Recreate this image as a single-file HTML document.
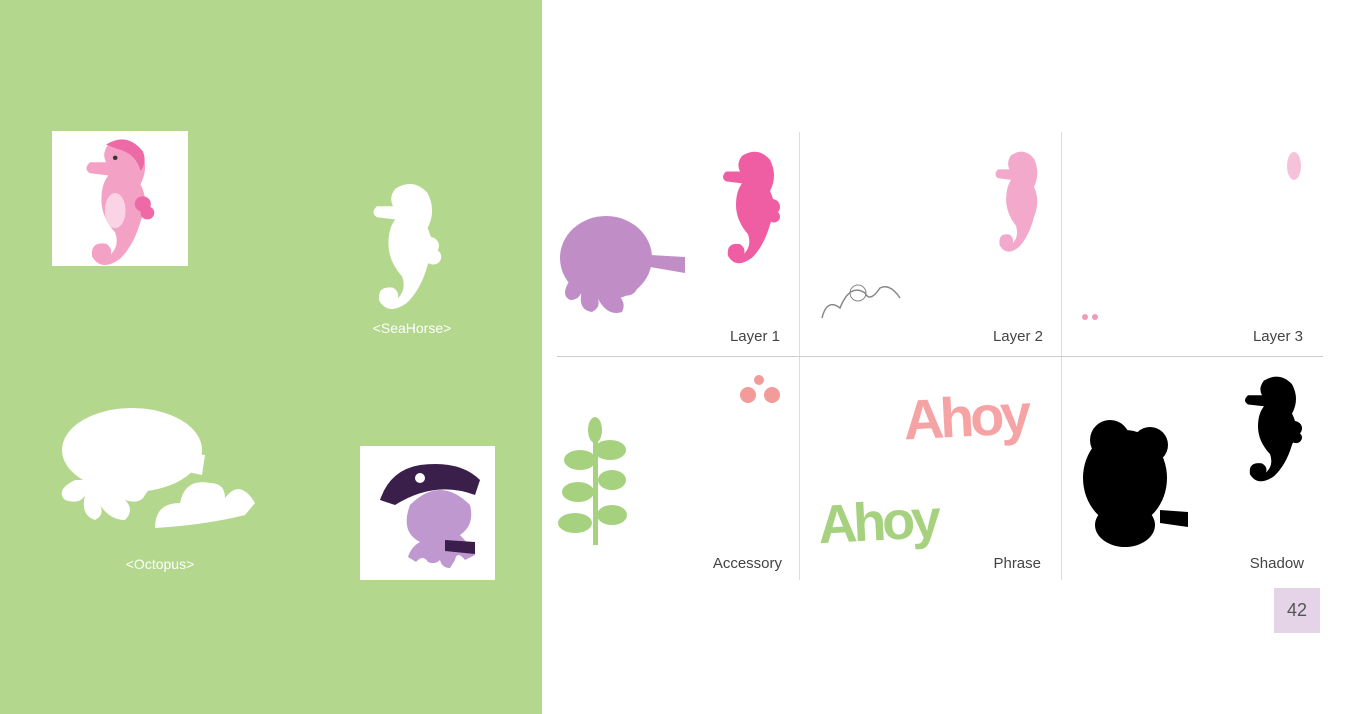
<!DOCTYPE html>
<html><head><meta charset="utf-8"><style>
html,body{margin:0;padding:0;width:1365px;height:714px;overflow:hidden;background:#fff;font-family:"Liberation Sans",sans-serif}
.abs{position:absolute}
.lbl{position:absolute;font-size:15px;color:#444;text-align:right;width:120px}
</style></head><body>
<div class="abs" style="left:0;top:0;width:542px;height:714px;background:#b3d78c"></div>
<svg class="abs" style="left:0;top:0" width="1365" height="714" viewBox="0 0 1365 714">
<rect x="52" y="131" width="136" height="135" fill="#fff"/>
<g transform="translate(83 138) scale(1.15 1.1)">
<path d="M22 6 Q38 -4 50 10 Q58 26 50 42 Q58 58 50 76 Q44 98 32 110 Q16 122 8 108 Q6 94 20 96 Q26 100 24 106 Q32 98 28 86 Q16 72 16 56 Q16 42 22 34 L6 32 Q0 28 6 22 L20 22 Q16 14 22 6 Z" fill="#f3a2c6"/>
<path d="M20 6 Q38 -6 52 12 Q56 22 50 30 Q46 14 30 10Z" fill="#ee6aa7"/>
<circle cx="52" cy="60" r="7" fill="#ee6aa7"/><circle cx="56" cy="68" r="6" fill="#ee6aa7"/>
<ellipse cx="28" cy="66" rx="9" ry="16" fill="#fad3e4"/>
<circle cx="28" cy="18" r="2" fill="#333"/>
</g>
<g transform="translate(370 182) scale(1.15 1.1)" fill="#fff">
<path d="M22 6 Q38 -4 50 10 Q58 26 50 42 Q58 58 50 76 Q44 98 32 110 Q16 122 8 108 Q6 94 20 96 Q26 100 24 106 Q32 98 28 86 Q16 72 16 56 Q16 42 22 34 L6 32 Q0 28 6 22 L20 22 Q16 14 22 6 Z"/>
<circle cx="52" cy="58" r="8"/><circle cx="55" cy="68" r="7"/>
</g>
<g fill="#fff">
<ellipse cx="132" cy="450" rx="70" ry="42"/>
<path d="M75 480 q-20 10-10 20 q15 5 20-5 q-5 20 10 25 q10-5 5-15 q10 15 25 15 q10-10 0-20 q15 5 20-5 l10-15z"/>
<path d="M165 450 l40 5 l-3 20 l-38-8z"/>
<path d="M155 528 q0-25 25-25 q5-25 30-20 q15 0 15 15 q15-20 30 5 l-10 12 q-40 10-90 13z"/>
</g>
<text x="412" y="333" fill="#fff" font-size="14" text-anchor="middle" font-family="Liberation Sans">&lt;SeaHorse&gt;</text>
<text x="160" y="569" fill="#fff" font-size="14" text-anchor="middle" font-family="Liberation Sans">&lt;Octopus&gt;</text>
<rect x="360" y="446" width="135" height="134" fill="#fff"/>
<path d="M410 505 q30-30 60 0 q5 20-10 30 q10 10 15 20 l-10 5 q-8-10-10 0 l-5 8 q-8 0-10-8 q-5 5-12 2 q-5-8-12 0 l-8-5 q3-10 12-15 q-20-10-10-37z" fill="#bf98cf"/>
<path d="M380 500 q10-30 40-35 q40-5 60 15 l-5 15 q-40-15-80 10z" fill="#3a1f4a"/>
<circle cx="420" cy="478" r="5" fill="#fff"/>
<path d="M445 540 l30 2 l0 12 l-30-3z" fill="#3a1f4a"/>
<line x1="799.5" y1="132" x2="799.5" y2="580" stroke="#ddd"/>
<line x1="1061.5" y1="132" x2="1061.5" y2="580" stroke="#ddd"/>
<line x1="557" y1="356.5" x2="1323" y2="356.5" stroke="#ccc"/>
<ellipse cx="606" cy="258" rx="46" ry="42" fill="#c08dc7"/>
<path d="M570 280 q-10 15 0 20 q10 0 12-10 q-5 20 10 22 q10-5 5-15 q10 20 25 15 q5-10-5-18 q15 5 20-5 l-10-12z" fill="#c08dc7"/>
<path d="M650 255 l35 2 l0 16 l-35-6z" fill="#c08dc7"/>
<g transform="translate(720 150) scale(1 0.98)" fill="#ef5ea2">
<path d="M22 6 Q38 -4 50 10 Q58 26 50 42 Q58 58 50 76 Q44 98 32 110 Q16 122 8 108 Q6 94 20 96 Q26 100 24 106 Q32 98 28 86 Q16 72 16 56 Q16 42 22 34 L6 32 Q0 28 6 22 L20 22 Q16 14 22 6 Z"/>
<circle cx="52" cy="58" r="8"/><circle cx="54" cy="68" r="6"/></g>
<g transform="translate(993 150) scale(0.82 0.88)">
<path d="M22 6 Q38 -4 50 10 Q58 26 50 42 Q58 58 50 76 Q44 98 32 110 Q16 122 8 108 Q6 94 20 96 Q26 100 24 106 Q32 98 28 86 Q16 72 16 56 Q16 42 22 34 L6 32 Q0 28 6 22 L20 22 Q16 14 22 6 Z" fill="#f3a9cc"/></g>
<path d="M822 318 q5-20 18-10 q10-25 25-15 q5 10 15-5 q10-5 20 10" fill="none" stroke="#888" stroke-width="1.5"/>
<circle cx="858" cy="293" r="8" fill="none" stroke="#888"/>
<ellipse cx="1294" cy="166" rx="7" ry="14" fill="#f6c2da"/>
<circle cx="1085" cy="317" r="3" fill="#f29bb6"/><circle cx="1095" cy="317" r="3" fill="#f29bb6"/>
<circle cx="759" cy="380" r="5" fill="#f29b9b"/><circle cx="748" cy="395" r="8" fill="#f29b9b"/><circle cx="772" cy="395" r="8" fill="#f29b9b"/>
<g fill="#a6d27f"><rect x="593" y="420" width="5" height="125"/>
<ellipse cx="595" cy="430" rx="7" ry="13"/><ellipse cx="580" cy="460" rx="16" ry="10"/><ellipse cx="610" cy="450" rx="16" ry="10"/><ellipse cx="612" cy="480" rx="14" ry="10"/><ellipse cx="578" cy="492" rx="16" ry="10"/><ellipse cx="612" cy="515" rx="15" ry="10"/><ellipse cx="575" cy="523" rx="17" ry="10"/></g>
<text x="903" y="436" font-size="56" font-weight="bold" fill="#f5a3a5" font-family="Liberation Sans" letter-spacing="-4" transform="rotate(-3 970 410)">Ahoy</text>
<text x="818" y="540" font-size="54" font-weight="bold" fill="#a6d27f" font-family="Liberation Sans" letter-spacing="-4" transform="rotate(-3 880 520)">Ahoy</text>
<g fill="#000"><ellipse cx="1125" cy="478" rx="42" ry="48"/><circle cx="1110" cy="440" r="20"/><circle cx="1150" cy="445" r="18"/><ellipse cx="1125" cy="525" rx="30" ry="22"/><path d="M1160 510 l28 2 l0 15 l-28-4z"/>
<g transform="translate(1242 375) scale(1 0.92)"><path d="M22 6 Q38 -4 50 10 Q58 26 50 42 Q58 58 50 76 Q44 98 32 110 Q16 122 8 108 Q6 94 20 96 Q26 100 24 106 Q32 98 28 86 Q16 72 16 56 Q16 42 22 34 L6 32 Q0 28 6 22 L20 22 Q16 14 22 6 Z"/><circle cx="52" cy="58" r="8"/><circle cx="54" cy="68" r="6"/></g></g>
</svg>
<div class="lbl" style="left:660px;top:328px">Layer 1</div>
<div class="lbl" style="left:923px;top:328px">Layer 2</div>
<div class="lbl" style="left:1183px;top:328px">Layer 3</div>
<div class="lbl" style="left:662px;top:555px">Accessory</div>
<div class="lbl" style="left:921px;top:555px">Phrase</div>
<div class="lbl" style="left:1184px;top:555px">Shadow</div>
<div class="abs" style="left:1274px;top:588px;width:46px;height:45px;background:#e5d3e8;color:#555;font-size:18px;line-height:45px;text-align:center">42</div>
</body></html>
